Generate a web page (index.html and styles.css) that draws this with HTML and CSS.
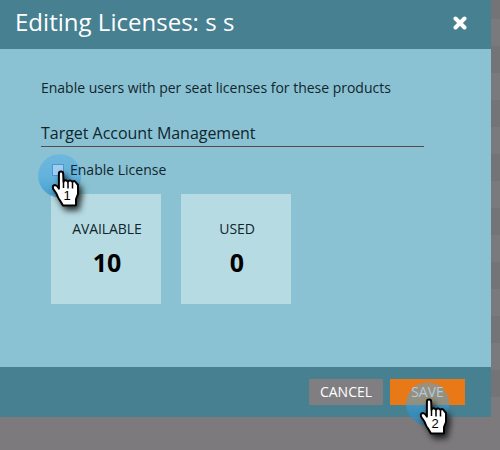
FILE: index.html
```html
<!DOCTYPE html>
<html lang="en">
<head>
<meta charset="utf-8">
<title>Editing Licenses</title>
<link rel="stylesheet" href="styles.css">
</head>
<body>
<svg class="defs" aria-hidden="true">
  <defs>
    <linearGradient id="halo" x1="0" y1="0" x2="0" y2="1">
      <stop offset="0" stop-color="#4baae8" stop-opacity=".46"/>
      <stop offset=".5" stop-color="#40a5e4" stop-opacity=".52"/>
      <stop offset="1" stop-color="#1585c9" stop-opacity=".6"/>
    </linearGradient>
    <symbol id="hand" viewBox="0 0 60 66">
      <path d="M20.9 19.7Q20.9 17.4 23 17.4Q25.2 17.4 25.2 19.7L25.5 27.6Q27.4 25 29.8 27.6Q32.2 25.2 34.4 28Q36.7 25.9 38.2 28.8L40 31V40L38 45V51.2L25 51.6L22.3 47Q20.2 44.8 18.5 39.8L15.1 34.7Q14 31.2 17 31.1Q19 31.4 20.9 34.6Z" fill="#fff" stroke="#000" stroke-width="2" stroke-linejoin="round"/>
      <path d="M25.5 27.5V34M30 28V34.5M34.5 28.5V34.5" stroke="#000" stroke-width="1.5" fill="none"/>
    </symbol>
  </defs>
</svg>
<section class="dialog">
  <header class="header">
    <h1 class="title">Editing Licenses: s s</h1>
    <svg class="close" viewBox="0 0 14 14"><path d="M2.5 2.5L11.5 11.5M11.5 2.5L2.5 11.5"/></svg>
  </header>
  <main class="content">
    <p class="intro">Enable users with per seat licenses for these products</p>
    <h2 class="product">Target Account Management</h2>
    <div class="license">
      <span class="checkbox">
        <svg class="pointer pointer-one" viewBox="0 0 60 66"><circle cx="21.7" cy="21.8" r="21.6" fill="url(#halo)"/><rect x="14.5" y="10.5" width="11" height="11" class="box-mark"/><use href="#hand" width="60" height="66" class="hand"/><text x="29" y="46">1</text></svg>
      </span>
      <span class="license-label">Enable License</span>
    </div>
    <div class="cards">
      <div class="card"><span class="card-name">AVAILABLE</span><strong class="card-value">10</strong></div>
      <div class="card"><span class="card-name">USED</span><strong class="card-value">0</strong></div>
    </div>
  </main>
  <footer class="footer">
    <div class="button cancel">CANCEL</div>
    <div class="button save"><span class="save-label">SAVE</span>
      <svg class="pointer pointer-two" viewBox="0 0 60 66"><circle cx="21.7" cy="21.8" r="21.6" fill="url(#halo)"/><use href="#hand" width="60" height="66" class="hand"/><text x="29" y="46">2</text></svg>
    </div>
  </footer>
</section>
</body>
</html>
```
FILE: styles.css
```css
* { box-sizing: border-box; }
body {
  margin: 0;
  height: 450px;
  overflow: hidden;
  background:
    linear-gradient(#7c7a7d, #7c7a7d) 0 397px / 100% 53px no-repeat,
    repeating-linear-gradient(#747376 0 27px, #7a797c 27px 54px) 0 -8px / 100% 405px no-repeat;
  font-family: "Open Sans", sans-serif;
  color: #10262d;
}
.defs { position: absolute; width: 0; height: 0; }
.dialog { width: 491px; height: 417px; display: flex; flex-direction: column; }
.header {
  height: 49px;
  padding: 0 24px 3px 15px;
  display: flex;
  align-items: center;
  justify-content: space-between;
  background: #468091;
  color: #fff;
}
.title { margin: -2px 0 0; font-size: 24px; line-height: 32px; font-weight: 400; letter-spacing: .02px; }
.close { width: 14px; height: 14px; fill: none; stroke: #fff; stroke-width: 4; stroke-linecap: round; }
.content { height: 318px; padding: 29px 67px 0 41px; background: #8ac2d3; }
.intro { margin: 0; font-size: 14px; line-height: 20px; letter-spacing: -.015px; white-space: nowrap; }
.product {
  margin: 23px 0 0;
  height: 26px;
  border-bottom: 1px solid #584b49;
  font-size: 16px;
  line-height: 24px;
  font-weight: 400;
  letter-spacing: -.03px;
}
.license { height: 20px; margin: 13px 0 0 11px; display: flex; align-items: center; gap: 6px; font-size: 14px; }
.checkbox { position: relative; width: 12px; height: 12px; border: 1px solid #398ed0; background: #c4dcf3; }
.license-label { position: relative; line-height: 20px; z-index: 2; }
.cards { display: flex; gap: 20px; margin: 14px 0 0 10px; }
.card { width: 110px; height: 110px; padding: 25px 0 0 2px; background: #b7dbe2; display: flex; flex-direction: column; align-items: center; }
.card-name { font-size: 14px; line-height: 20px; letter-spacing: -.1px; }
.card-value { margin-top: 7px; font-size: 25px; line-height: 32px; color: #000; }
.footer { height: 50px; padding: 12px 26px 0 0; display: flex; justify-content: flex-end; gap: 7px; background: #468091; }
.button { height: 26px; line-height: 26px; font-size: 14px; text-align: center; color: #fff; }
.cancel { width: 74px; background: #807e81; }
.save { position: relative; width: 75px; background: #e97817; }
.save-label { position: relative; z-index: 2; color: #a9cde4; }
.pointer { position: absolute; width: 60px; height: 66px; overflow: visible; z-index: 1; }
.pointer-one { left: -15px; top: -11px; }
.pointer-two { left: 16px; top: 3px; }
.box-mark { fill: #a3cdf0; stroke: #4a97d2; }
.hand { filter: drop-shadow(3px 4px 3px rgba(0, 0, 0, .8)); }
.pointer text { font: 13px "Liberation Sans", sans-serif; fill: #000; text-anchor: middle; }
```
